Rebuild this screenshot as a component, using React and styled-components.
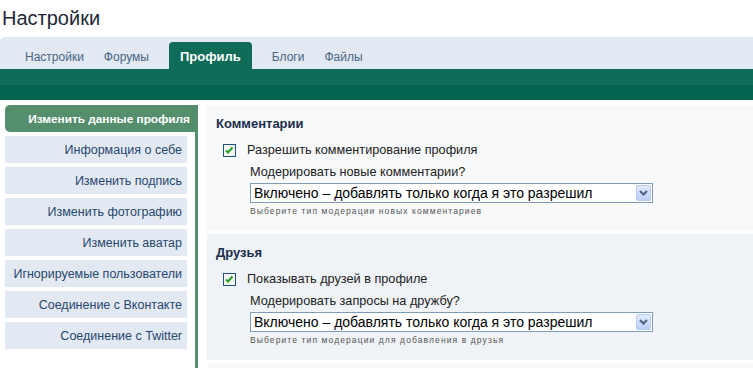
import React from 'react';
import styled, { createGlobalStyle } from 'styled-components';

const GlobalStyle = createGlobalStyle`
    body {
        margin: 0;
        background: #ffffff;
        font-family: "Liberation Sans", Arial, sans-serif;
    }
`;

const Page = styled.div`
    width: 753px;
    height: 368px;
    overflow: hidden;
`;

const Title = styled.h1`
    margin: 0;
    padding: 5px 0 0 2px;
    height: 37px;
    box-sizing: border-box;
    font-size: 20px;
    font-weight: normal;
    line-height: 26px;
    color: #1e2836;
`;

const TabBar = styled.div`
    display: flex;
    align-items: flex-end;
    height: 32px;
    padding-left: 15px;
    background: #e2e9f2;
    border-radius: 5px 0 0 0;
`;

const Tab = styled.div`
    display: flex;
    align-items: center;
    height: 27px;
    padding: 2px ${p => (p.$active ? '11px' : '10px')} 0;
    margin: 0 ${p => (p.$active ? '10px' : '0')};
    font-size: ${p => (p.$active ? '13px' : '12px')};
    font-weight: ${p => (p.$active ? 'bold' : 'normal')};
    color: ${p => (p.$active ? '#ffffff' : '#4a6584')};
    background: ${p => (p.$active ? '#0f6c59' : 'transparent')};
    border-radius: 4px 4px 0 0;
    box-sizing: border-box;
`;

const Band = styled.div`
    height: 31px;
    background: linear-gradient(to bottom, #0f6c59 0, #0f6c59 16px, #02644e 16px, #02644e 100%);
`;

const Body = styled.div`
    display: flex;
    align-items: stretch;
    margin-top: 5px;
`;

const Sidebar = styled.div`
    width: 190px;
    padding-left: 5px;
    border-right: 3px solid #558e6c;
    display: flex;
    flex-direction: column;
    gap: 4px;
    min-height: 270px;
`;

const SideItem = styled.div`
    height: 27px;
    width: ${p => (p.$active ? '190px' : '182px')};
    box-sizing: border-box;
    display: flex;
    align-items: center;
    justify-content: flex-end;
    padding-right: 5px;
    font-size: ${p => (p.$active ? '11.8px' : '12.5px')};
    font-weight: ${p => (p.$active ? 'bold' : 'normal')};
    color: ${p => (p.$active ? '#ffffff' : '#27476e')};
    background: ${p => (p.$active ? '#558e6c' : '#e3e9f2')};
    border-radius: ${p => (p.$active ? '5px 0 0 5px' : '0')};
    white-space: nowrap;
`;

const Main = styled.div`
    flex: 1;
    margin-left: 9px;
    display: flex;
    flex-direction: column;
    gap: 3px;
`;

const Section = styled.div`
    background: ${p => p.$tone};
    padding: 10px 9px 14px;
`;

const Heading = styled.h3`
    margin: 0;
    font-size: 13px;
    line-height: 18px;
    font-weight: bold;
    color: #1a2d4a;
`;

const CheckRow = styled.label`
    display: flex;
    align-items: center;
    gap: 11px;
    height: 18px;
    margin: 8px 0 0 7px;
    font-size: 12.7px;
    color: #222;
`;

const Field = styled.div`
    margin: 6px 0 0 34px;
    display: flex;
    flex-direction: column;
`;

const FieldLabel = styled.div`
    font-size: 12.7px;
    line-height: 15px;
    color: #222;
`;

const Select = styled.div`
    position: relative;
    margin-top: 3px;
    width: 403px;
    height: 20px;
    box-sizing: border-box;
    border: 1px solid #7f9db9;
    background: #fff;
    display: flex;
    align-items: center;
    padding-left: 3px;
    font-size: 14px;
    color: #000;
`;

const DropButton = styled.div`
    position: absolute;
    right: 1px;
    top: 1px;
    width: 15px;
    height: 16px;
    box-sizing: border-box;
    border: 1px solid #b8ccf2;
    border-radius: 2px;
    background: linear-gradient(to bottom, #e2ebfe, #b9cdf8);
    display: flex;
    align-items: center;
    justify-content: center;
`;

const Hint = styled.div`
    margin-top: 2px;
    font-size: 8.5px;
    line-height: 12px;
    letter-spacing: 1.1px;
    color: #555;
`;

const Box = () => (
    <svg width="13" height="13" viewBox="0 0 13 13">
        <rect x="0.5" y="0.5" width="12" height="12" fill="#f4f4f0" stroke="#1c5180" />
        <path d="M3 6.5 L5 8.5 L9.5 3.5" fill="none" stroke="#21a121" strokeWidth="2" />
    </svg>
);

const Chevron = () => (
    <svg width="9" height="6" viewBox="0 0 9 6">
        <path d="M1 1 L4.5 4.5 L8 1" fill="none" stroke="#4d6185" strokeWidth="2" />
    </svg>
);

const tabs = ['Настройки', 'Форумы', 'Профиль', 'Блоги', 'Файлы'];
const links = [
    'Изменить данные профиля',
    'Информация о себе',
    'Изменить подпись',
    'Изменить фотографию',
    'Изменить аватар',
    'Игнорируемые пользователи',
    'Соединение с Вконтакте',
    'Соединение с Twitter',
];

const sections = [
    {
        title: 'Комментарии',
        check: 'Разрешить комментирование профиля',
        question: 'Модерировать новые комментарии?',
        hint: 'Выберите тип модерации новых комментариев',
        tone: '#f8f9fb',
    },
    {
        title: 'Друзья',
        check: 'Показывать друзей в профиле',
        question: 'Модерировать запросы на дружбу?',
        hint: 'Выберите тип модерации для добавления в друзья',
        tone: '#eff2f6',
    },
    { tone: '#f8f9fb' },
];

export default function App() {
    return (
        <Page>
            <GlobalStyle />
            <Title>Настройки</Title>
            <TabBar>
                {tabs.map(t => (
                    <Tab key={t} $active={t === 'Профиль'}>{t}</Tab>
                ))}
            </TabBar>
            <Band />
            <Body>
                <Sidebar>
                    {links.map((l, i) => (
                        <SideItem key={l} $active={i === 0}>{l}</SideItem>
                    ))}
                </Sidebar>
                <Main>
                    {sections.map((s, i) =>
                        s.title ? (
                            <Section key={i} $tone={s.tone}>
                                <Heading>{s.title}</Heading>
                                <CheckRow>
                                    <Box />
                                    {s.check}
                                </CheckRow>
                                <Field>
                                    <FieldLabel>{s.question}</FieldLabel>
                                    <Select>
                                        Включено – добавлять только когда я это разрешил
                                        <DropButton><Chevron /></DropButton>
                                    </Select>
                                    <Hint>{s.hint}</Hint>
                                </Field>
                            </Section>
                        ) : (
                            <Section key={i} $tone={s.tone} />
                        )
                    )}
                </Main>
            </Body>
        </Page>
    );
}
